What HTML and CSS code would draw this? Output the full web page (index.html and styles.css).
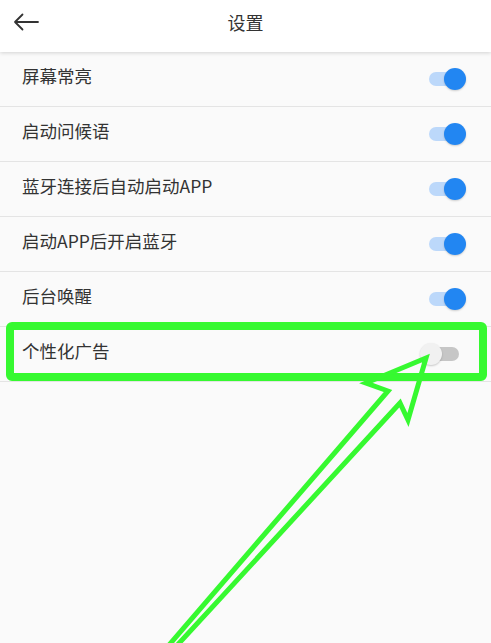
FILE: index.html
```html
<!DOCTYPE html>
<html lang="zh">
<head>
<meta charset="utf-8">
<title>设置</title>
<link rel="stylesheet" href="styles.css">
</head>
<body>
<div class="page">
  <header class="topbar">
    <span class="back">
      <svg width="26" height="18" viewBox="0 0 26 18"><path d="M25 9H2M9.5 1.5L2 9l7.5 7.5" fill="none" stroke="#333" stroke-width="1.8" stroke-linecap="round" stroke-linejoin="round"/></svg>
    </span>
    <h1 class="title">设置</h1>
  </header>
  <ul class="list">
    <li class="row"><span class="label">屏幕常亮</span><span class="switch on"><span class="track"></span><span class="knob"></span></span></li>
    <li class="row"><span class="label">启动问候语</span><span class="switch on"><span class="track"></span><span class="knob"></span></span></li>
    <li class="row"><span class="label">蓝牙连接后自动启动APP</span><span class="switch on"><span class="track"></span><span class="knob"></span></span></li>
    <li class="row"><span class="label">启动APP后开启蓝牙</span><span class="switch on"><span class="track"></span><span class="knob"></span></span></li>
    <li class="row"><span class="label">后台唤醒</span><span class="switch on"><span class="track"></span><span class="knob"></span></span></li>
    <li class="row"><span class="label">个性化广告</span><span class="switch off"><span class="track"></span><span class="knob"></span></span></li>
  </ul>
  <svg class="annot" width="491" height="643" viewBox="0 0 491 643">
    <rect x="10" y="326" width="473" height="51" rx="2" fill="none" stroke="#36f930" stroke-width="8"/>
    <polygon points="163,652 388,391 366,383 426,358 408,420 400,403 171,652" fill="none" stroke="#36f930" stroke-width="5" stroke-linejoin="miter"/>
  </svg>
</div>
</body>
</html>
```

FILE: styles.css
```css
* { box-sizing: border-box; }
html, body { margin: 0; padding: 0; }
body {
  background: #fafafa;
  font-family: "Noto Sans CJK SC", "Noto Sans", sans-serif;
  color: #333;
}
.page {
  position: relative;
  width: 491px;
  height: 643px;
  overflow: hidden;
  background: #fafafa;
}
.topbar {
  position: relative;
  height: 52px;
  background: #fff;
  display: flex;
  align-items: center;
  justify-content: center;
  box-shadow: 0 1px 4px rgba(0,0,0,0.16);
  z-index: 1;
}
.back {
  position: absolute;
  left: 13px;
  top: 13px;
  display: flex;
}
.title {
  margin: 0;
  font-size: 18px;
  font-weight: normal;
  color: #333;
  line-height: 1;
  margin-top: -8px;
}
.list {
  list-style: none;
  margin: 0;
  padding: 0;
}
.row {
  height: 55px;
  display: flex;
  align-items: center;
  justify-content: space-between;
  padding: 0 25px 0 22px;
  border-bottom: 1px solid #e4e4e4;
}
.label {
  font-size: 17.5px;
  line-height: 1;
  color: #333;
  margin-top: -6px;
}
.switch {
  position: relative;
  width: 46px;
  height: 24px;
}
.track {
  position: absolute;
  left: 9px;
  top: 5px;
  width: 33px;
  height: 14px;
  border-radius: 7px;
}
.knob {
  position: absolute;
  top: 1px;
  width: 22px;
  height: 22px;
  border-radius: 50%;
}
.on .track { background: #bcd8fa; }
.on .knob {
  left: 24px;
  background: #2286f2;
  box-shadow: 0 1px 2px rgba(0,0,0,0.18);
}
.off .track { background: #c6c6c6; width: 30px; }
.off .knob {
  left: 0;
  background: #f1f1f1;
  box-shadow: 0 1px 2px rgba(0,0,0,0.2);
}
.annot {
  position: absolute;
  left: 0;
  top: 0;
  pointer-events: none;
  z-index: 2;
}
```
